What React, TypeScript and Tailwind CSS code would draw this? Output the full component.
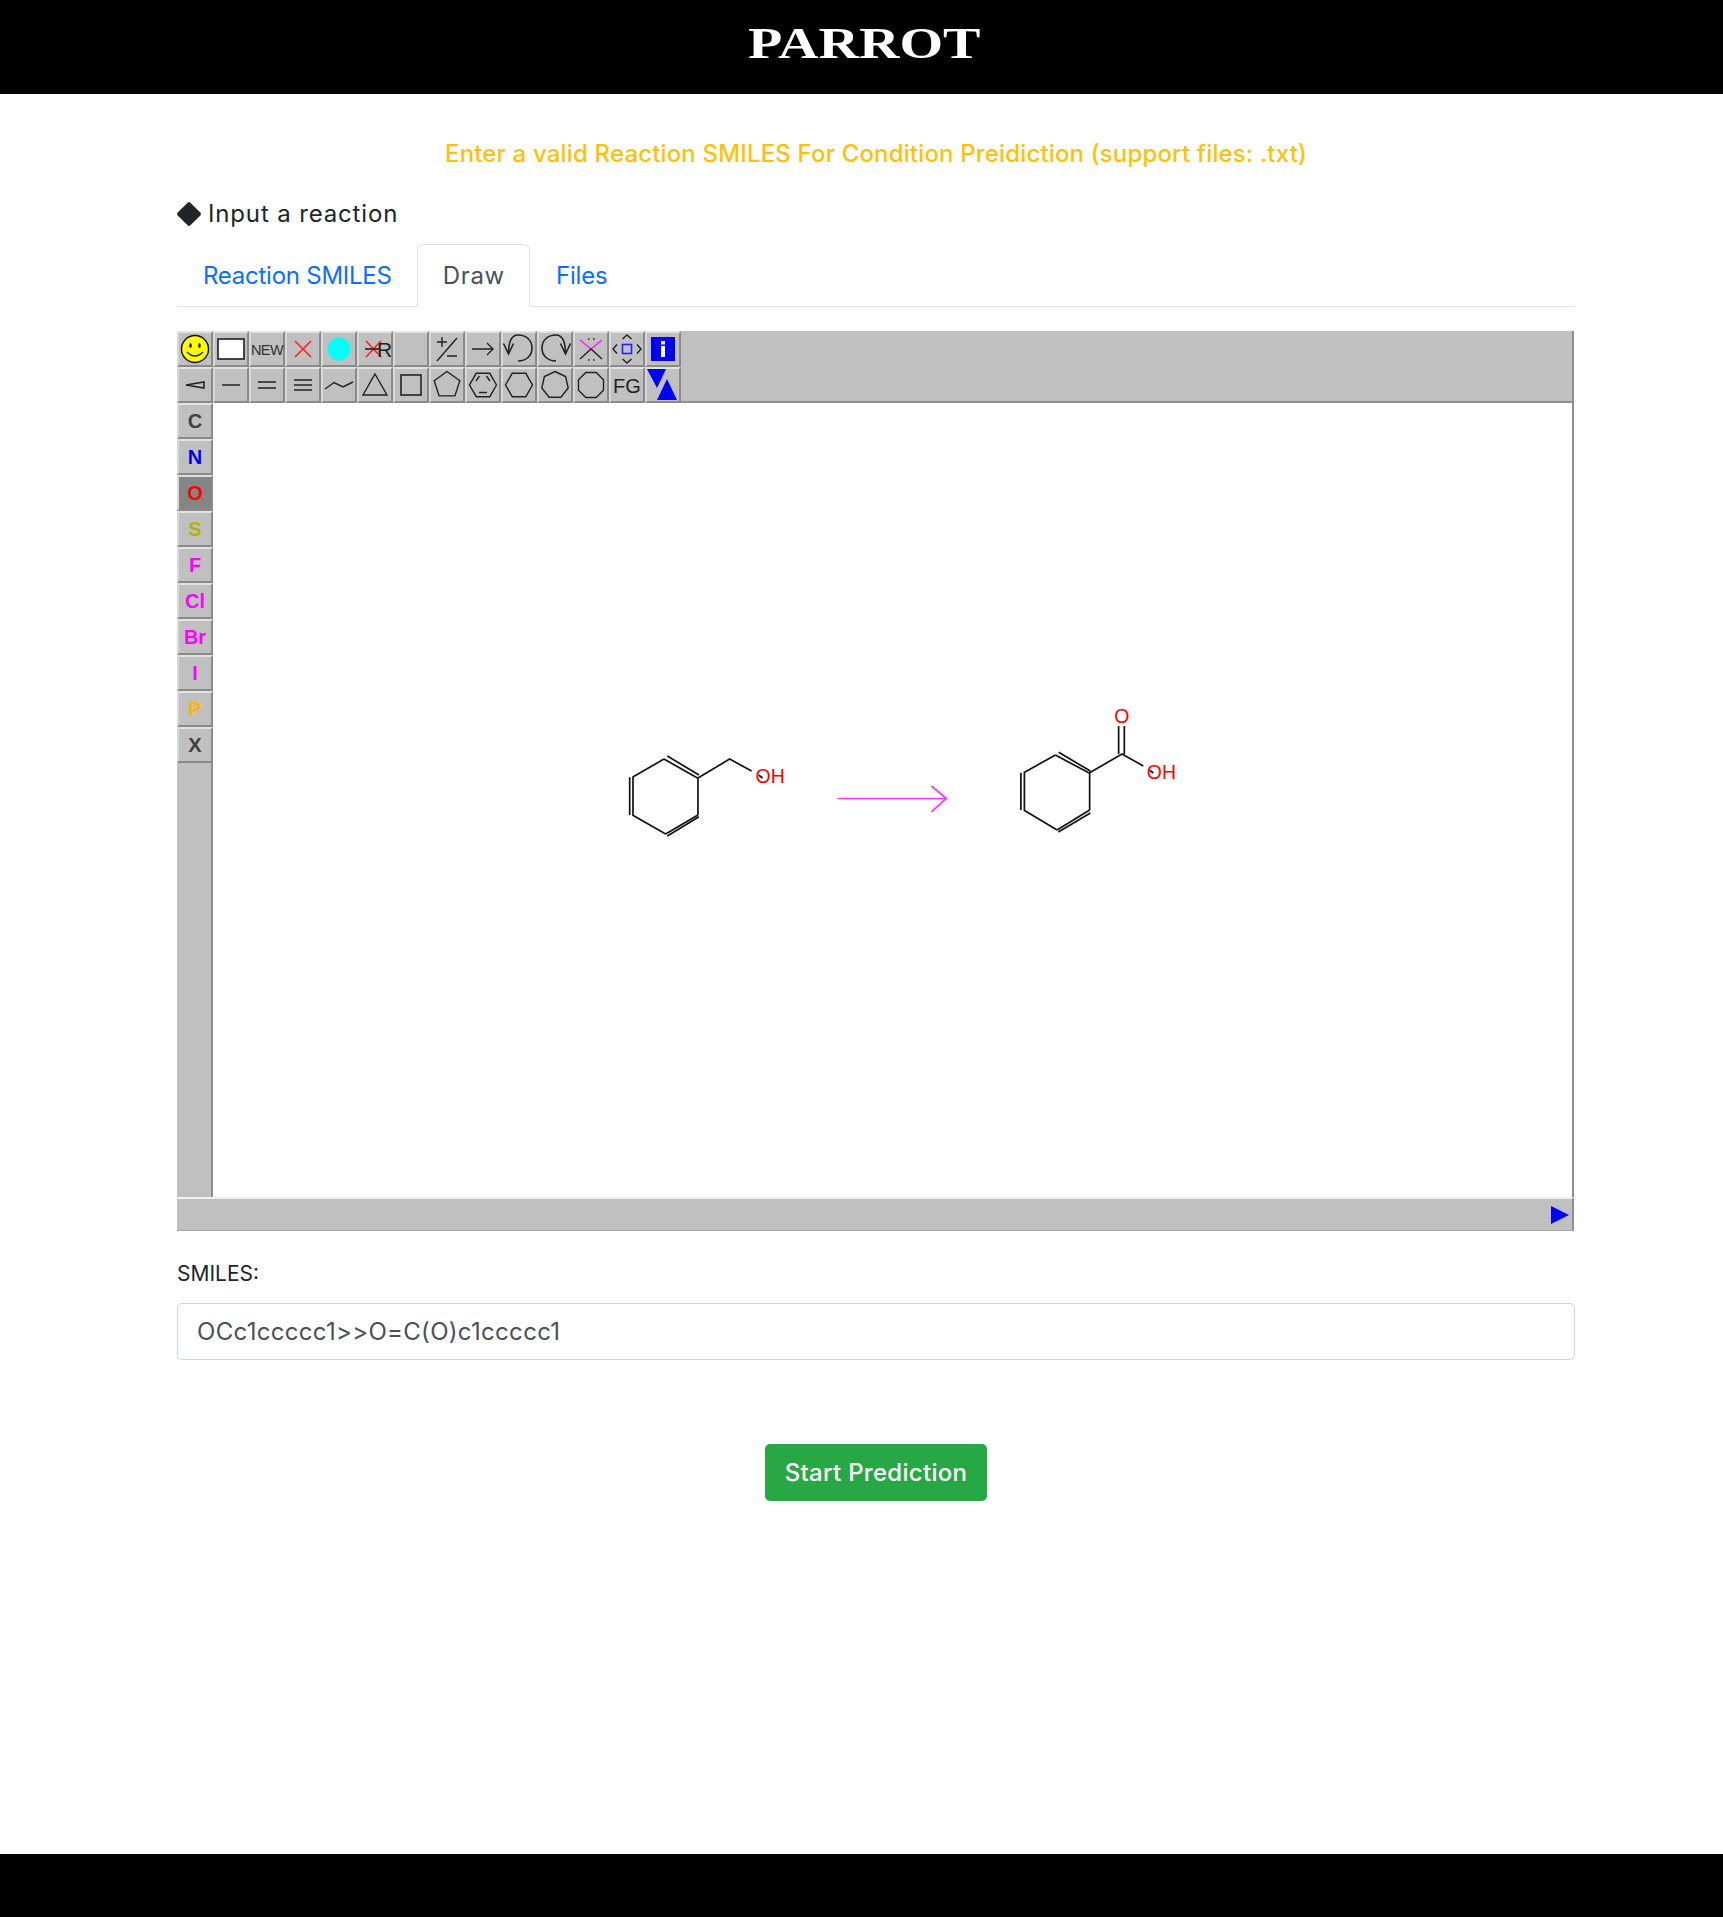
import React from 'react';

const ngon = (n: number, r: number, start = -90) =>
  Array.from({ length: n }, (_, i) => {
    const a = ((start + (i * 360) / n) * Math.PI) / 180;
    return `${(18 + r * Math.cos(a)).toFixed(1)},${(18 + r * Math.sin(a)).toFixed(1)}`;
  }).join(' ');

const Svg = ({ children }: { children?: React.ReactNode }) => (
  <svg viewBox="0 0 36 36" className="-m-0.5 block h-9 w-9 max-w-none" fill="none" stroke="#222" strokeWidth="1.4">
    {children}
  </svg>
);

const topRow: React.ReactNode[] = [
  <Svg>
    <circle cx="18" cy="18" r="13.5" fill="#ffff00" stroke="#111" />
    <ellipse cx="13.5" cy="14.5" rx="1.2" ry="2.5" fill="#111" stroke="none" />
    <ellipse cx="22.5" cy="14.5" rx="1.2" ry="2.5" fill="#111" stroke="none" />
    <path d="M10 21 Q18 29 26 21" />
  </Svg>,
  <Svg>
    <rect x="5" y="8" width="26" height="20" fill="#fff" stroke="#333" strokeWidth="1.8" />
  </Svg>,
  <Svg>
    <text x="2" y="23.5" fontFamily="Liberation Sans" fontSize="14.5" fill="#333" stroke="none" letterSpacing="-0.6">NEW</text>
  </Svg>,
  <Svg>
    <path d="M10 10 L26 26 M26 10 L10 26" stroke="#ff2020" strokeWidth="1.6" />
  </Svg>,
  <Svg>
    <circle cx="18" cy="18" r="11.5" fill="#00ffff" stroke="none" />
  </Svg>,
  <Svg>
    <path d="M9 10 L24 26 M24 10 L9 26" stroke="#ff2020" strokeWidth="1.6" />
    <path d="M8 18 H23" strokeWidth="1.6" />
    <text x="20" y="26" fontFamily="Liberation Sans" fontSize="21" fill="#222" stroke="none">R</text>
  </Svg>,
  <Svg />,
  <Svg>
    <path d="M8 30 L28 7 M8 11 H18 M13 6 V16 M18 25 H28" />
  </Svg>,
  <Svg>
    <path d="M7 18 H28 M22 12 L28 18 L22 24" />
  </Svg>,
  <Svg>
    <path d="M17 30 C25 30 31 25 31 17 C31 9 25 4 17 4 C11 4 7.5 9 7.5 23 M2.5 12.5 L7.5 23 L12.5 12.5" strokeWidth="1.6" />
  </Svg>,
  <Svg>
    <path d="M19 30 C11 30 5 25 5 17 C5 9 11 4 19 4 C25 4 28.5 9 28.5 23 M33.5 12.5 L28.5 23 L23.5 12.5" strokeWidth="1.6" />
  </Svg>,
  <Svg>
    <path d="M7 9 L18 18 L29 9" stroke="#ff20ff" strokeWidth="1.6" />
    <path d="M7 28 L18 18 L29 28" />
    <path d="M15 8 h1.5 M20 8 h1.5 M15 29 h1.5 M20 29 h1.5" />
  </Svg>,
  <Svg>
    <rect x="13.5" y="13.5" width="9" height="9" stroke="#2222ff" strokeWidth="1.6" />
    <path d="M13.5 8 L18 4 L22.5 8 M13.5 28 L18 32 L22.5 28 M8 13.5 L4 18 L8 22.5 M28 13.5 L32 18 L28 22.5" />
  </Svg>,
  <Svg>
    <rect x="6" y="6" width="24" height="24" fill="#0000ff" stroke="none" />
    <rect x="16" y="10" width="4" height="3.5" fill="#fff" stroke="none" />
    <rect x="16" y="15" width="4" height="11" fill="#fff" stroke="none" />
  </Svg>,
];

const bottomRow: React.ReactNode[] = [
  <Svg>
    <path d="M9 18 L27 15 V21 Z" strokeWidth="1.5" />
  </Svg>,
  <Svg>
    <path d="M9 18 H27" strokeWidth="1.5" />
  </Svg>,
  <Svg>
    <path d="M9 15 H27 M9 21 H27" strokeWidth="1.5" />
  </Svg>,
  <Svg>
    <path d="M9 13 H27 M9 18 H27 M9 23 H27" strokeWidth="1.4" />
  </Svg>,
  <Svg>
    <path d="M4 22 L13 15.5 L22 20 L32 15" />
  </Svg>,
  <Svg>
    <polygon points="18,7 30,28 6,28" />
  </Svg>,
  <Svg>
    <rect x="8" y="8" width="20" height="20" strokeWidth="1.6" />
  </Svg>,
  <Svg>
    <polygon points={ngon(5, 13.5)} />
  </Svg>,
  <Svg>
    <polygon points={ngon(6, 13.5, 0)} />
    <path d="M11 14 L14.5 9 M21.5 9 L25 14 M14 25.5 H22" />
  </Svg>,
  <Svg>
    <polygon points={ngon(6, 13.5, 0)} />
  </Svg>,
  <Svg>
    <polygon points={ngon(7, 13.5)} />
  </Svg>,
  <Svg>
    <polygon points={ngon(8, 13.5, 22.5)} />
  </Svg>,
  <Svg>
    <text x="4" y="25.5" fontFamily="Liberation Sans" fontSize="20" fill="#222" stroke="none">FG</text>
  </Svg>,
  <Svg>
    <polygon points="2,2 21,2 12,21" fill="#0000ff" stroke="none" />
    <polygon points="22,12 32,33 12,33" fill="#0000ff" stroke="none" />
  </Svg>,
];

const atoms = [
  { label: 'C', color: 'text-[#404040]' },
  { label: 'N', color: 'text-[#0000ff]' },
  { label: 'O', color: 'text-[#ff0000]', active: true },
  { label: 'S', color: 'text-[#b3b300]' },
  { label: 'F', color: 'text-[#ff00ff]' },
  { label: 'Cl', color: 'text-[#ff00ff]' },
  { label: 'Br', color: 'text-[#ff00ff]' },
  { label: 'I', color: 'text-[#ff00ff]' },
  { label: 'P', color: 'text-[#ffb800]' },
  { label: 'X', color: 'text-[#404040]' },
];

const ToolButton = ({ children }: { children: React.ReactNode }) => (
  <div className="h-9 w-9 shrink-0 border-2 border-t-[#e2e2e2] border-r-[#8a8a8a] border-b-[#8a8a8a] border-l-[#d8d8d8] bg-[#c0c0c0]">
    {children}
  </div>
);

const Molecules = () => (
  <svg viewBox="212 403 1360 794" className="block h-full w-full" fill="none" stroke="#111" strokeWidth="1.7">
    <path d="M663.3 759 L631.7 777.3 M631.7 815 L665 834 M697.3 778 V815 M663.3 759 L697.3 778.3 M666.7 756 L698.3 775 M629 777.3 V815 M632.3 777.3 V815 M665 834 L697.3 815 M666.7 836 L698.3 816.7 M697.3 778 L729 759 L751 771 M758 775 L762 778" />
    <text x="755" y="783" fill="#ff0000" stroke="none" fontFamily="Liberation Sans" fontSize="19.5">OH</text>
    <path d="M837 798.5 H946 M931 786 L946 798.5 L931 812" stroke="#ff33ff" />
    <path d="M1055 755 L1023.3 772.7 M1023.3 810 L1056.7 830 M1089.3 773 V810 M1055 755 L1089.3 773.3 M1058.3 752.3 L1090 771 M1020.5 772.7 V810 M1024 772.7 V810 M1056.7 830 L1089.3 810 M1058 832 L1090 813 M1089.3 772.7 L1121.7 754 L1143 766 M1118.3 726 V754 M1124 726 V754 M1149 770 L1153 773" />
    <text x="1114" y="723" fill="#ff0000" stroke="none" fontFamily="Liberation Sans" fontSize="19.5">O</text>
    <text x="1146.5" y="779" fill="#ff0000" stroke="none" fontFamily="Liberation Sans" fontSize="19.5">OH</text>
  </svg>
);

export default function App() {
  return (
    <div className="flex min-h-[1917px] flex-col bg-white font-['Inter',sans-serif] text-[#212529]">
      <header className="flex h-[94px] shrink-0 justify-center bg-black pt-[19px] pl-[6px]">
        <h1 className="h-fit origin-center scale-x-[1.274] font-['Liberation_Serif',serif] text-[44px] leading-[50px] font-bold text-white">
          PARROT
        </h1>
      </header>

      <main className="ml-[177px] w-[1398px] flex-1">
        <h2 className="mt-[44px] text-center text-2xl leading-8 font-medium tracking-[0.16px] text-[#ffc107]">
          Enter a valid Reaction SMILES For Condition Preidiction (support files: .txt)
        </h2>

        <div className="mt-[28px] flex items-center gap-[7px] text-2xl leading-8">
          <span className="ml-[3px] block h-[18px] w-[18px] rotate-45 rounded-[2px] bg-[#212529]" />
          <span className="ml-[3px] tracking-[0.85px]">Input a reaction</span>
        </div>

        <nav className="mt-[13px] flex h-[64px] border-b border-[#dee2e6] pt-[1px] text-2xl">
          <a className="flex items-center pt-[1px] pr-[25px] pl-[26px] tracking-[-0.25px] text-[#0d6efd]">Reaction SMILES</a>
          <a className="mb-[-1px] flex items-center rounded-t-md border border-[#dee2e6] border-b-white bg-white pt-[1px] pr-[24px] pl-[25px] tracking-[0.7px] text-[#495057]">
            Draw
          </a>
          <a className="flex items-center px-[26px] pt-[1px] tracking-[-0.2px] text-[#0d6efd]">Files</a>
        </nav>

        <section className="mt-[24px] w-[1397px] bg-[#c0c0c0]">
          <div className="h-[72px] border-r-2 border-b-2 border-[#8f8f8f]">
            <div className="flex">
              {topRow.map((icon, i) => (
                <ToolButton key={i}>{icon}</ToolButton>
              ))}
            </div>
            <div className="flex">
              {bottomRow.map((icon, i) => (
                <ToolButton key={i}>{icon}</ToolButton>
              ))}
            </div>
          </div>

          <div className="flex h-[794px] border-r-2 border-[#8f8f8f]">
            <div className="flex w-9 shrink-0 flex-col">
              {atoms.map((a) => (
                <div
                  key={a.label}
                  className={`flex h-9 w-9 shrink-0 items-center justify-center border-2 border-t-[#e2e2e2] border-r-[#8a8a8a] border-b-[#8a8a8a] border-l-[#d8d8d8] font-['Liberation_Sans',sans-serif] text-xl font-bold ${a.color} ${a.active ? 'bg-[#858585]' : 'bg-[#c0c0c0]'}`}
                >
                  {a.label}
                </div>
              ))}
              <div className="flex-1 border-r-2 border-[#8f8f8f]" />
            </div>
            <div className="flex-1 bg-white">
              <Molecules />
            </div>
          </div>

          <div className="flex h-[34px] items-center justify-end border-t-2 border-r-2 border-b border-t-[#f0f0f0] border-r-[#8f8f8f] border-b-[#a8a8a8] pr-[3px]">
            <svg viewBox="0 0 18 18" className="h-[18px] w-[18px]">
              <polygon points="0,0 18,9 0,18" fill="#0000ff" />
            </svg>
          </div>
        </section>

        <label className="mt-[27px] block text-[21px] leading-8">SMILES:</label>
        <div className="mt-[13px] flex h-[57px] items-center rounded-[5px] border border-[#ced4da] px-[19px] text-2xl tracking-[0.3px] text-[#495057]">
          OCc1ccccc1&gt;&gt;O=C(O)c1ccccc1
        </div>

        <div className="mt-[84px] flex justify-center">
          <button className="h-[57px] w-[222px] rounded-[5px] bg-[#28a745] text-2xl font-medium tracking-[0.3px] text-white">
            Start Prediction
          </button>
        </div>
      </main>

      <footer className="h-[63px] shrink-0 bg-black" />
    </div>
  );
}
